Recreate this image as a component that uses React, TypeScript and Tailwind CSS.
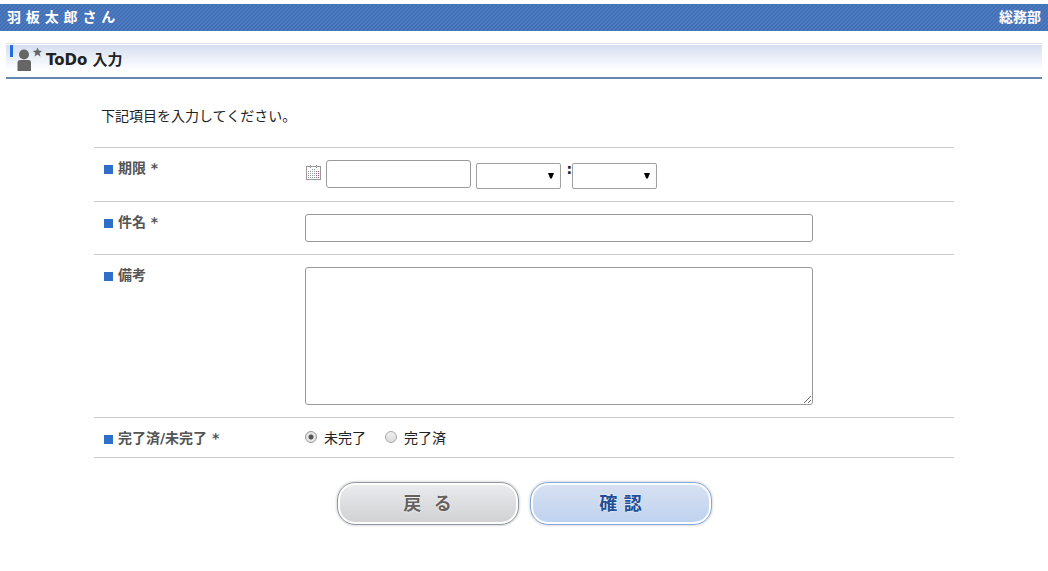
import { useState } from 'react'
import type { ReactNode } from 'react'

const hours = Array.from({ length: 24 }, (_, i) => String(i).padStart(2, '0'))
const minutes = Array.from({ length: 12 }, (_, i) => String(i * 5).padStart(2, '0'))

function UserIcon() {
  return (
    <svg className="h-7 w-8 shrink-0" viewBox="0 0 32 28" aria-hidden="true">
      <rect x="0" y="0" width="3" height="12" fill="#1f6fe0" />
      <circle cx="14" cy="9.5" r="5" fill="#666" />
      <path d="M7.5 26v-8.500q0-2.500 2.500-2.500h8.500q2.500 0 2.500 2.500V26z" fill="#666" />
      <path d="M27.500 2.500l1.300 3.100 3.400.3-2.600 2.200.8 3.300-2.900-1.800-2.900 1.800.8-3.300-2.600-2.200 3.400-.3z" fill="#666" />
    </svg>
  )
}

function CalendarIcon() {
  return (
    <svg className="h-4 w-[15px]" viewBox="0 0 15 16" shapeRendering="crispEdges" aria-hidden="true">
      <rect x="0.5" y="1.5" width="14" height="13" fill="#fff" stroke="#999" />
      <path d="M4.5 0v3M10.5 0v3" stroke="#999" />
      <path d="M6 4.5h3M2 6.5h7M2 8.5h7M2 10.5h7M2 12.5h7" stroke="#999" strokeDasharray="1 1" />
      <path d="M10.5 6v7" stroke="#4a86d0" strokeDasharray="1 1" />
      <path d="M12.5 6v7" stroke="#e0393e" strokeDasharray="1 1" />
    </svg>
  )
}

function Row({ label, htmlFor, id, children }: { label: string; htmlFor?: string; id?: string; children: ReactNode }) {
  return (
    <div className="flex border-b border-[#ccc]">
      <div className="flex w-[211px] shrink-0 items-start gap-[5px] pt-3 pl-[10px] text-sm leading-4 font-bold text-[#555]">
        <span className="mt-[5px] size-[9px] bg-[#2f6fca]" />
        {htmlFor ? <label htmlFor={htmlFor}>{label}</label> : <span id={id}>{label}</span>}
      </div>
      <div className="min-w-0 flex-1 py-3">{children}</div>
    </div>
  )
}

function TimeSelect({ label, options }: { label: string; options: string[] }) {
  const [value, setValue] = useState('')
  return (
    <span className="relative">
      <select
        aria-label={label}
        value={value}
        onChange={e => setValue(e.target.value)}
        className="block h-[26px] w-[85px] appearance-none rounded-[2px] border border-[#a0a0a0] bg-white px-2 text-xs"
      >
        <option value="" />
        {options.map(o => <option key={o}>{o}</option>)}
      </select>
      <svg className="pointer-events-none absolute top-[10px] right-[7px] h-[6px] w-[6px]" viewBox="0 0 6 6" aria-hidden="true">
        <path d="M0 0h6L3.8 5.5H2.2z" fill="#000" />
      </svg>
    </span>
  )
}

function Radio({ label, checked, onChange }: { label: string; checked: boolean; onChange: () => void }) {
  return (
    <label className="flex items-start gap-[7px]">
      <input
        type="radio"
        name="status"
        checked={checked}
        onChange={onChange}
        className="mt-px size-3 appearance-none rounded-full border border-[#a8a8a8] bg-linear-to-b from-[#eee] to-[#ddd] checked:border-[#999] checked:bg-[radial-gradient(circle,#555_0_2px,#e6e6e6_3px)]"
      />
      <span className="-mb-0.5 leading-[17px]">{label}</span>
    </label>
  )
}

export default function App() {
  const [done, setDone] = useState(false)

  return (
    <div className="bg-white pt-1 pb-10 font-['DejaVu_Sans','Noto_Sans_CJK_JP',sans-serif] text-sm text-[#222]">
      <header className="flex h-[27px] items-center justify-between bg-[linear-gradient(135deg,#436fb4_25%,#4c7bc1_25%_50%,#436fb4_50%_75%,#4c7bc1_75%)] bg-size-[4px_4px] px-[7px] pb-px font-bold text-white">
        <span>羽 板 太 郎 さ ん</span>
        <span>総務部</span>
      </header>

      <main>
        <div className="mx-[6px] mt-3 border-t border-[#dde3ed] pt-px">
          <div className="flex h-[34px] items-start gap-1 border-b-2 border-[#6488ad] bg-linear-to-b from-[#d6dff0] to-white to-80% pl-1">
            <UserIcon />
            <h1 className="text-[15px] leading-[30px] font-bold">ToDo 入力</h1>
          </div>
        </div>

        <form className="mx-auto max-w-[860px]" onSubmit={e => e.preventDefault()}>
          <p className="px-[7px] pt-[27px] pb-[21px] leading-5">下記項目を入力してください。</p>

          <div className="border-t border-[#ccc]">
            <Row label="期限 *" htmlFor="due">
              <div className="flex items-start">
                <button type="button" title="カレンダー" className="mt-[5px] mr-[5px] ml-px">
                  <CalendarIcon />
                </button>
                <input id="due" type="text" className="mr-[5px] h-7 w-[145px] rounded-[3px] border border-[#999] px-2" />
                <div className="flex pt-[3px]">
                  <TimeSelect label="時" options={hours} />
                  <span className="w-[11px] text-right leading-3 font-bold">:</span>
                  <TimeSelect label="分" options={minutes} />
                </div>
              </div>
            </Row>
            <Row label="件名 *" htmlFor="subject">
              <input id="subject" type="text" className="block h-7 w-full max-w-[508px] rounded-[3px] border border-[#999] px-2" />
            </Row>
            <Row label="備考" htmlFor="note">
              <textarea id="note" className="block h-[138px] w-full max-w-[508px] resize rounded-[3px] border border-[#999] px-2 py-1" />
            </Row>
            <Row label="完了済/未完了 *" id="status-label">
              <div role="radiogroup" aria-labelledby="status-label" className="flex gap-[19px]">
                <Radio label="未完了" checked={!done} onChange={() => setDone(false)} />
                <Radio label="完了済" checked={done} onChange={() => setDone(true)} />
              </div>
            </Row>
          </div>

          <div className="mt-6 flex justify-center gap-[11px] text-lg font-bold">
            <button
              type="button"
              className="h-[43px] w-[182px] rounded-[18px] border border-[#8f96a6] bg-linear-to-b from-[#ebecef] to-[#cfd0d2] whitespace-pre text-[#66615e] shadow-[inset_0_0_0_2px_#fff,0_0_3px_#bbb] text-shadow-[0_0_2px_#fff]"
            >
              {'戻  る'}
            </button>
            <button
              type="submit"
              className="h-[43px] w-[182px] rounded-[18px] border border-[#82a9e0] bg-linear-to-b from-[#d9e2f2] to-[#bdd1ef] text-[#1f4e96] shadow-[inset_0_0_0_2px_#fff,0_0_3px_#bbb] text-shadow-[0_0_2px_#fff]"
            >
              確 認
            </button>
          </div>
        </form>
      </main>
    </div>
  )
}
